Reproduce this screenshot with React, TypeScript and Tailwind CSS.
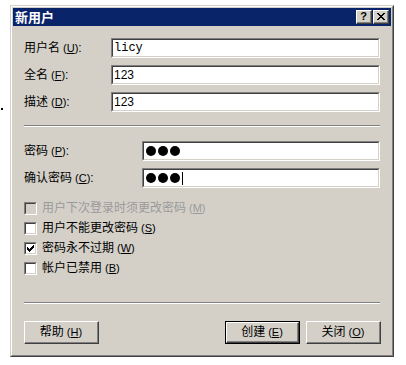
import React from "react";

const font = { fontFamily: '"Liberation Sans", "Noto Sans CJK SC", sans-serif' };

function Sunken({ className = "", children, disabled = false }: { className?: string; children?: React.ReactNode; disabled?: boolean }) {
  return (
    <div className={`border-t border-l border-b border-r border-t-[#808080] border-l-[#808080] border-b-white border-r-white ${className}`}>
      <div className={`h-full w-full border-t border-l border-b border-r border-t-[#404040] border-l-[#404040] border-b-[#d4d0c8] border-r-[#d4d0c8] ${disabled ? "bg-[#d4d0c8]" : "bg-white"} flex items-center pl-[1px]`}>
        {children}
      </div>
    </div>
  );
}

function Mn({ t, k }: { t: string; k: string }) {
  return (
    <span className="whitespace-nowrap">
      {t}
      <span className="text-[11px] ml-[3px]">(<span className="underline">{k}</span>)</span>
    </span>
  );
}

function Btn({ t, k, def = false }: { t: string; k: string; def?: boolean }) {
  const inner = (
    <div className="h-full w-full border-t border-l border-b border-r border-t-white border-l-white border-b-[#404040] border-r-[#404040]">
      <div className="h-full w-full border-b border-r border-b-[#808080] border-r-[#808080] flex items-center justify-center text-[12px] text-black">
        <Mn t={t} k={k} />
      </div>
    </div>
  );
  if (def)
    return <div className="w-[75px] h-[23px] border border-black">{inner}</div>;
  return <div className="w-[75px] h-[23px]">{inner}</div>;
}

function Check({ label, k, checked = false, disabled = false }: { label: string; k: string; checked?: boolean; disabled?: boolean }) {
  return (
    <div className="h-[20px] flex items-center">
      <Sunken className="w-[13px] h-[13px]" disabled={disabled}>
        {checked && (
          <svg width="7" height="7" viewBox="0 0 7 7" className="-ml-[0px]" shapeRendering="crispEdges">
            <path d="M0 2h1v1h1v1h1v-1h1v-1h1v-1h1v-1h1v3h-1v1h-1v1h-1v1h-1v1h-1v-1h-1v-1h-1v-1h-1z" fill="#000" />
          </svg>
        )}
      </Sunken>
      <span className={`ml-[5px] text-[12px] ${disabled ? "text-[#9a9a9a]" : "text-black"}`}>
        <Mn t={label} k={k} />
      </span>
    </div>
  );
}

function Row({ label, k, inputLeft, children }: { label: string; k: string; inputLeft: number; children?: React.ReactNode }) {
  return (
    <div className="flex items-center h-[20px]">
      <div className="text-[12px] text-black" style={{ width: inputLeft }}>
        <Mn t={label} k={k} />:
      </div>
      <Sunken className="flex-1 h-[20px]">{children}</Sunken>
    </div>
  );
}

function Dots({ caret = false }: { caret?: boolean }) {
  return (
    <div className="flex items-center gap-[2px] ml-[1px]">
      <div className="w-[10px] h-[10px] rounded-full bg-black" />
      <div className="w-[10px] h-[10px] rounded-full bg-black" />
      <div className="w-[10px] h-[10px] rounded-full bg-black" />
      {caret && <div className="w-[1px] h-[13px] bg-black ml-[0px]" />}
    </div>
  );
}

function Sep() {
  return (
    <div>
      <div className="h-[1px] bg-[#808080]" />
      <div className="h-[1px] bg-white" />
    </div>
  );
}

export default function App() {
  return (
    <div className="relative w-[406px] h-[365px] bg-white overflow-hidden" style={font}>
      <div className="absolute left-[1px] top-[108px] w-[2px] h-[2px] bg-black" />
      <div className="pl-[10px] pt-[5px]">
        <div className="w-[384px] h-[352px] border-t border-l border-b border-r border-t-[#d4d0c8] border-l-[#d4d0c8] border-b-[#404040] border-r-[#404040]">
          <div className="h-full w-full border-t border-l border-b border-r border-t-white border-l-white border-b-[#808080] border-r-[#808080] bg-[#d4d0c8] p-[1px] flex flex-col">
            {/* title bar */}
            <div className="h-[18px] bg-[#0a246a] flex items-center pl-[2px] pr-[2px]">
              <span className="text-white font-bold text-[13px] leading-none">新用户</span>
              <div className="ml-auto flex">
                <div className="w-[16px] h-[14px] border-t border-l border-b border-r border-t-white border-l-white border-b-[#404040] border-r-[#404040] bg-[#d4d0c8]">
                  <div className="h-full w-full border-b border-r border-b-[#808080] border-r-[#808080] flex items-center justify-center text-[11px] font-bold leading-none text-black">?</div>
                </div>
                <div className="ml-[1px] w-[16px] h-[14px] border-t border-l border-b border-r border-t-white border-l-white border-b-[#404040] border-r-[#404040] bg-[#d4d0c8]">
                  <div className="h-full w-full border-b border-r border-b-[#808080] border-r-[#808080] flex items-center justify-center">
                    <svg width="8" height="7" viewBox="0 0 8 7" shapeRendering="crispEdges">
                      <path d="M0 0h2v1h1v1h2v-1h1v-1h2v1h-1v1h-1v1h-1v1h1v1h1v1h1v1h-2v-1h-1v-1h-2v1h-1v1h-2v-1h1v-1h1v-1h1v-1h-1v-1h-1v-1h-1z" fill="#000" />
                    </svg>
                  </div>
                </div>
              </div>
            </div>
            {/* content */}
            <div className="flex-1 px-[11px] flex flex-col">
              <div className="mt-[12px] flex flex-col gap-[7px]">
                <Row label="用户名" k="U" inputLeft={87}>
                  <span className="text-[12px] text-black" style={{ fontFamily: '"Liberation Mono", monospace' }}>licy</span>
                </Row>
                <Row label="全名" k="F" inputLeft={87}>
                  <span className="text-[12px] text-black">123</span>
                </Row>
                <Row label="描述" k="D" inputLeft={87}>
                  <span className="text-[12px] text-black">123</span>
                </Row>
              </div>
              <div className="mt-[13px]">
                <Sep />
              </div>
              <div className="mt-[14px] flex flex-col gap-[7px]">
                <Row label="密码" k="P" inputLeft={118}>
                  <Dots />
                </Row>
                <Row label="确认密码" k="C" inputLeft={118}>
                  <Dots caret />
                </Row>
              </div>
              <div className="mt-[10px] flex flex-col">
                <Check label="用户下次登录时须更改密码" k="M" disabled />
                <Check label="用户不能更改密码" k="S" />
                <Check label="密码永不过期" k="W" checked />
                <Check label="帐户已禁用" k="B" />
              </div>
              <div className="mt-[24px]">
                <Sep />
              </div>
              <div className="mt-[17px] flex items-center">
                <Btn t="帮助" k="H" />
                <div className="ml-auto flex gap-[6px] -mr-[1px]">
                  <Btn t="创建" k="E" def />
                  <Btn t="关闭" k="O" />
                </div>
              </div>
            </div>
          </div>
        </div>
      </div>
    </div>
  );
}
